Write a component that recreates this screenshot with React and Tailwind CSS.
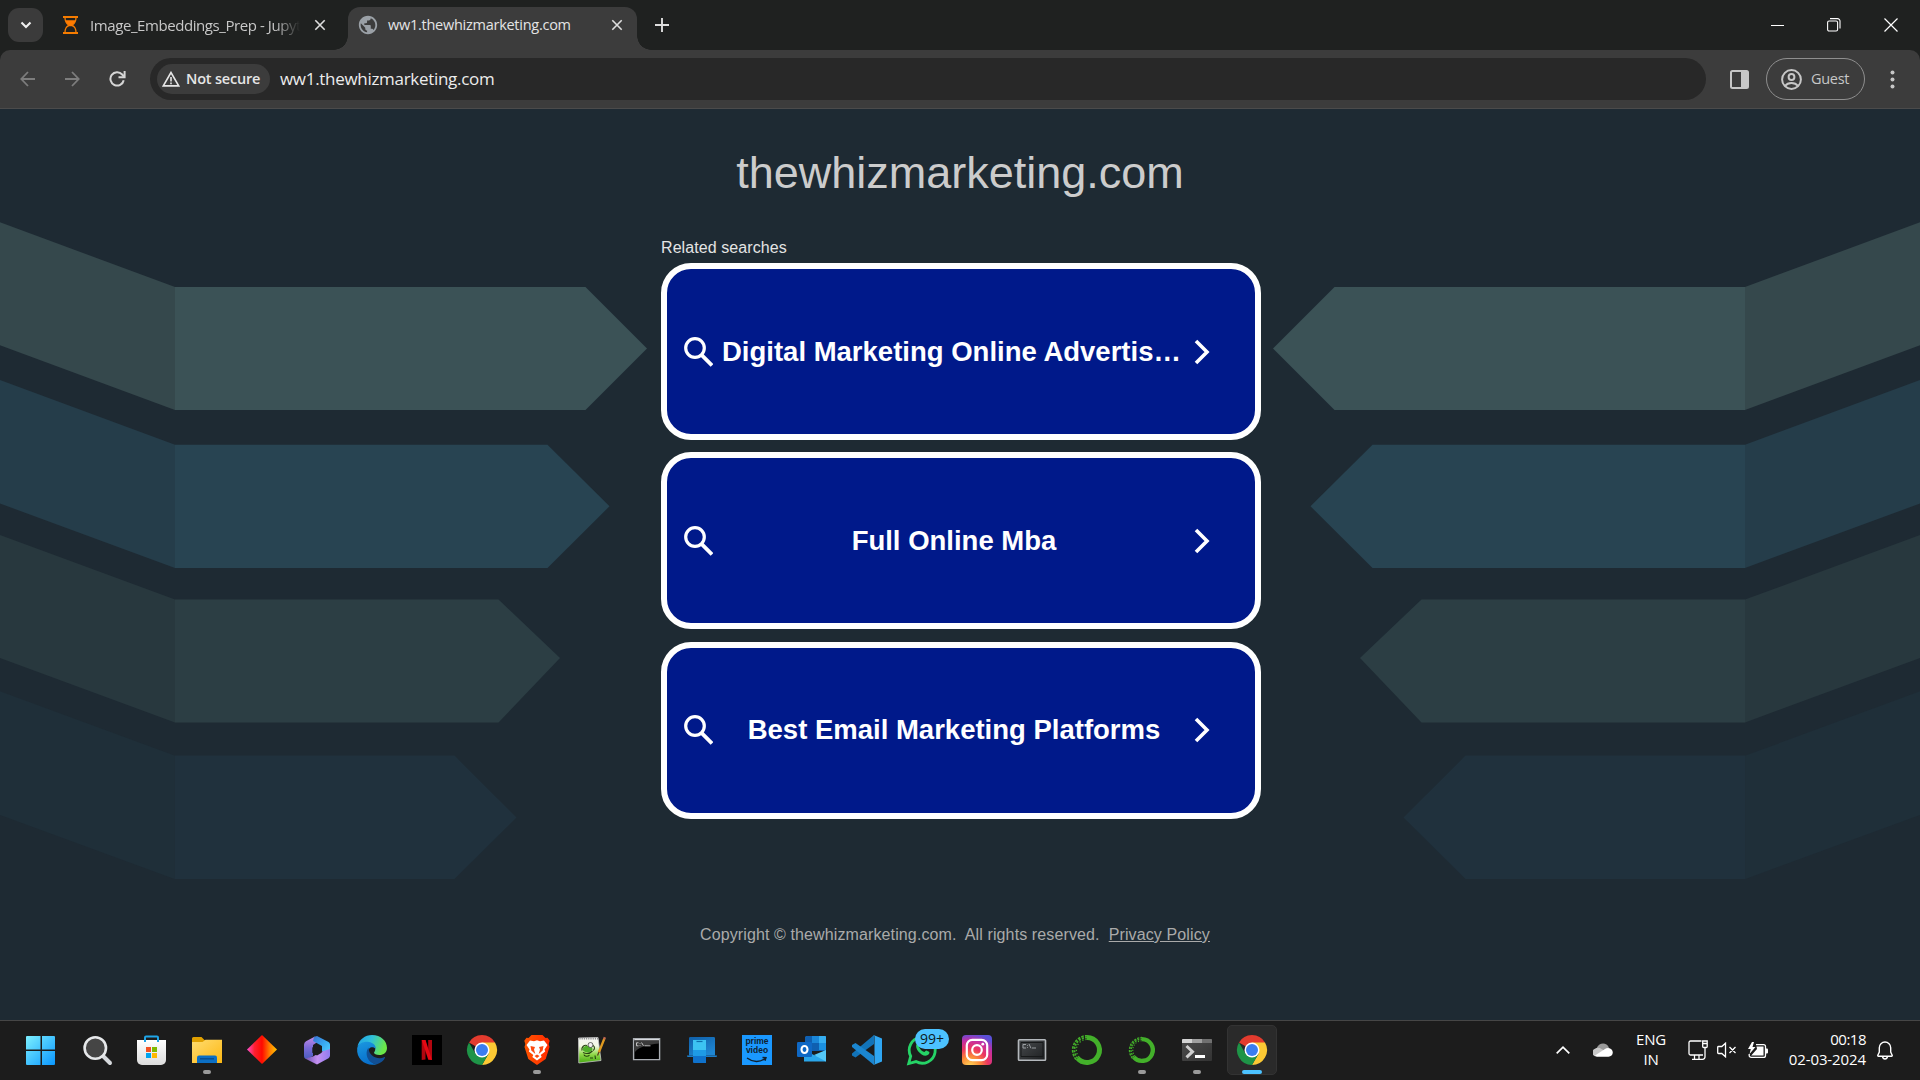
import React from "react";
import { MdPublic } from "react-icons/md";

const UI = "font-['Open_Sans','Noto_Sans',sans-serif]";

/* ---------- Page backdrop ---------- */

function Arrows() {
  return (
    <>
      <path d="M0 222.3 175 287V410L0 345.3Z" fill="#35484c" />
      <path d="M175 287H585.5L647 348.5 585.5 410H175Z" fill="#3b5256" />
      <path d="M0 380 175 444.7V568L0 503.5Z" fill="#253d4a" />
      <path d="M175 444.7H547.5L609.5 506.3 547.5 568H175Z" fill="#284452" />
      <path d="M0 535 175 599.6V722.5L0 658Z" fill="#28383e" />
      <path d="M175 599.6H498.5L560 658 498.5 722.5H175Z" fill="#2c3e44" />
      <path d="M0 691.3 174.5 755.6V879L0 815Z" fill="#1f2f39" />
      <path d="M174.5 755.6H454.5L516.5 817.5 454.5 879H174.5Z" fill="#20313d" />
    </>
  );
}

function Backdrop() {
  return (
    <svg className="absolute inset-0 h-full w-full" viewBox="0 109 1920 911">
      <Arrows />
      <g transform="translate(1920 0) scale(-1 1)">
        <Arrows />
      </g>
    </svg>
  );
}

/* ---------- Browser chrome ---------- */

function CloseX() {
  return (
    <svg className="h-3 w-3 shrink-0" viewBox="0 0 12 12" stroke="#dedede" strokeWidth="1.6">
      <path d="M1.3 1.3l9.4 9.4M10.7 1.3l-9.4 9.4" />
    </svg>
  );
}

function TabStrip() {
  return (
    <div className="flex h-[50px] items-center bg-[#1f2120] pl-2">
      <div className="-mt-px flex h-[34px] w-[35px] items-center justify-center rounded-[11px] bg-[#3b3b3b]">
        <svg width="12" height="8" viewBox="0 0 12 8" fill="none" stroke="#f0f0f0" strokeWidth="2.1">
          <path d="M1.5 1.5L6 6l4.5-4.5" />
        </svg>
      </div>
      <div className="flex h-full w-[305px] items-center pl-5">
        <svg className="shrink-0" width="15" height="18" viewBox="0 0 15 18">
          <path d="M0 0h15v1.900H0zM0 16.100h15V18H0z" fill="#f57c00" />
          <path d="M2 1.500c0 4 1.200 6 3.800 7.500C3.200 10.500 2 12.500 2 16.500M13 1.500c0 4-1.200 6-3.800 7.500 2.600 1.500 3.800 3.500 3.800 7.500" fill="none" stroke="#f57c00" strokeWidth="1.300" />
          <path d="M2.500 4.200h10c-.5 2.300-1.700 3.800-3.300 4.800 1.400.9 2.400 2 3 3.300-1.600-1.500-2.800-2.100-4.700-2.100s-3.100.6-4.700 2.100c.6-1.300 1.600-2.400 3-3.300-1.600-1-2.800-2.500-3.300-4.800z" fill="#ff7b00" />
        </svg>
        <div className="ml-3 w-[210px] overflow-hidden whitespace-nowrap text-[15px] leading-5 tracking-[-0.42px] text-[#c8c8c8] [mask-image:linear-gradient(90deg,#000_88%,transparent)]">
          Image_Embeddings_Prep - Jupyter
        </div>
        <div className="ml-[14px] flex">
          <CloseX />
        </div>
      </div>
      <div className="relative mt-[7px] flex h-[43px] w-[289px] items-center rounded-t-[12px] bg-[#3c3c3c] pb-[7px] pl-[9px] pr-[14px]">
        <div className="absolute bottom-0 -left-3.5 h-3.5 w-3.5 bg-[radial-gradient(circle_at_0_0,transparent_13.5px,#3c3c3c_14px)]" />
        <div className="absolute bottom-0 -right-3.5 h-3.5 w-3.5 bg-[radial-gradient(circle_at_100%_0,transparent_13.5px,#3c3c3c_14px)]" />
        <MdPublic className="h-[22px] w-[22px] shrink-0 text-[#9aa0a6]" />
        <div className="ml-[9px] flex-1 whitespace-nowrap text-[14.500px] leading-5 tracking-[-0.26px] text-[#e4e4e4]">ww1.thewhizmarketing.com</div>
        <CloseX />
      </div>
      <svg className="ml-[18px]" width="14" height="14" viewBox="0 0 14 14" stroke="#dedede" strokeWidth="1.900">
        <path d="M7 0v14M0 7h14" />
      </svg>
      <div className="flex-1" />
      <div className="-mt-px flex items-center gap-[43px] pr-[22px]">
        <svg width="14" height="14" viewBox="0 0 14 14">
          <path d="M1 7h13v1H1z" fill="#fff" />
        </svg>
        <svg width="14" height="14" viewBox="0 0 14 14" fill="none" stroke="#fff" strokeWidth="1.100">
          <rect x="0.600" y="3" width="10" height="10" rx="1.500" />
          <path d="M3 .6h7.500a2.500 2.500 0 0 1 2.500 2.500v7.400" />
        </svg>
        <svg width="14" height="14" viewBox="0 0 14 14" stroke="#fff" strokeWidth="1.200">
          <path d="M.5.500l13 13M13.500.500l-13 13" />
        </svg>
      </div>
    </div>
  );
}

function Toolbar() {
  return (
    <div className="bg-[#1f2120]">
      <div className="flex h-[59px] items-center rounded-t-[10px] border-b border-[#4b4b4b] bg-[#3c3c3c] pl-5">
        <svg width="15" height="16" viewBox="0 0 15 16" fill="none" stroke="#7d7d7d" strokeWidth="1.800">
          <path d="M15 8H1.500M8 1L1.300 8 8 15" />
        </svg>
        <svg className="ml-[30px]" width="15" height="16" viewBox="0 0 15 16" fill="none" stroke="#7d7d7d" strokeWidth="1.800">
          <path d="M0 8h13.500M7 1l6.700 7L7 15" />
        </svg>
        <svg className="ml-[29px]" width="17" height="16" viewBox="0 0 17 16" fill="none" stroke="#d6d6d6" strokeWidth="2">
          <path d="M14.700 9.200A6.700 6.700 0 1 1 13.200 3.500L15 5.500" />
          <path d="M15.600 0v6.300H9.500" />
        </svg>
        <div className="ml-6 flex h-[42px] w-[1556px] items-center rounded-full bg-[#282828] pl-[7px]">
          <div className="flex h-[30px] w-[113px] items-center rounded-full bg-[#3c3c3c] pl-[5px]">
            <svg width="18" height="16" viewBox="0 0 18 16" fill="none" stroke="#e6e6e6" strokeWidth="1.600">
              <path d="M9 1.500L1.300 14.900h15.400zM9 6v4.500M9 11.500v1.700" />
            </svg>
            <span className="ml-1.5 whitespace-nowrap text-[14.500px] font-semibold leading-5 tracking-[-0.2px] text-[#e6e6e6]">Not secure</span>
          </div>
          <span className="ml-2.5 whitespace-nowrap text-[17px] leading-6 tracking-[-0.3px] text-[#ececec]">ww1.thewhizmarketing.com</span>
        </div>
        <svg className="ml-6" width="19" height="19" viewBox="0 0 19 19">
          <rect x="1" y="1" width="17" height="17" rx="1.500" fill="none" stroke="#c7c7c7" strokeWidth="2" />
          <path d="M11 1h7v17h-7z" fill="#c7c7c7" />
        </svg>
        <div className="ml-[17px] flex h-[42px] w-[99px] items-center rounded-full border border-[#8f8f8f] pl-3.5">
          <svg width="21" height="21" viewBox="0 0 21 21" fill="none" stroke="#c7c7c7" strokeWidth="2">
            <circle cx="10.500" cy="10.500" r="9.400" />
            <circle cx="10.500" cy="8" r="2.900" />
            <path d="M4 17c1.500-2 4-3 6.500-3s5 1 6.500 3" />
          </svg>
          <span className="-mt-px ml-[9px] text-[14.500px] leading-5 tracking-[-0.3px] text-[#c7c7c7]">Guest</span>
        </div>
        <svg className="ml-[25px]" width="5" height="19" viewBox="0 0 5 19" fill="#c7c7c7">
          <circle cx="2.500" cy="2.500" r="2" />
          <circle cx="2.500" cy="9.500" r="2" />
          <circle cx="2.500" cy="16.500" r="2" />
        </svg>
      </div>
    </div>
  );
}

/* ---------- Page content ---------- */

function SearchCard({ label }) {
  return (
    <a className="flex h-[177px] w-[600px] items-center rounded-[30px] border-[6px] border-white bg-[#00198a] pl-[17px]">
      <svg className="shrink-0" width="29" height="30" viewBox="0 0 29 30" fill="none" stroke="#fff" strokeWidth="3.200">
        <circle cx="11" cy="11" r="9.300" />
        <path d="M17.500 17.800L28 28.500" strokeWidth="3.800" />
      </svg>
      <div className="ml-[9px] w-[464px] truncate text-center text-[27.500px] font-bold leading-8 text-white">{label}</div>
      <svg className="ml-2 shrink-0" width="16" height="26" viewBox="0 0 16 26" fill="none" stroke="#fff" strokeWidth="3.600">
        <path d="M2 2l11 11L2 24" />
      </svg>
    </a>
  );
}

function Page() {
  return (
    <main className="relative h-[911px] bg-[#1e2a33] font-['Liberation_Sans',Arial,sans-serif]">
      <Backdrop />
      <div className="relative left-px mx-auto flex w-[600px] flex-col">
        <h1 className="mt-[37px] -ml-0.5 text-center text-[45px] leading-[54px] text-[#cccccc]">thewhizmarketing.com</h1>
        <p className="mt-[38px] text-base leading-5 tracking-[0.08px] text-[#e4e4e4]">Related searches</p>
        <div className="mt-[5px] flex flex-col gap-[12.400px]">
          <SearchCard label="Digital Marketing Online Advertising Certificate" />
          <SearchCard label="Full Online Mba" />
          <SearchCard label="Best Email Marketing Platforms" />
        </div>
        <p className="mt-[106px] whitespace-pre pl-[39px] text-base leading-5 tracking-[0.115px] text-[#aaaaaa]">
          {"Copyright © thewhizmarketing.com.  All rights reserved.  "}
          <a className="underline">Privacy Policy</a>
        </p>
      </div>
    </main>
  );
}

/* ---------- Taskbar icons (30×30) ---------- */

function Icon({ children }) {
  return (
    <svg width="30" height="30" viewBox="0 0 30 30" className="overflow-visible">
      {children}
    </svg>
  );
}

function Grad({ id, stops, x2 = 1, y2 = 1 }) {
  return (
    <linearGradient id={id} x1="0" y1="0" x2={x2} y2={y2}>
      {stops.map((c, i) => (
        <stop key={i} offset={i / (stops.length - 1)} stopColor={c} />
      ))}
    </linearGradient>
  );
}

function WindowsIcon() {
  return (
    <Icon>
      <Grad id="win" stops={["#7df0ff", "#43c3ff", "#0a97ff"]} />
      <path d="M0 1h13.500v13.500H-1V2a1 1 0 0 1 1-1zM15 1h12a1 1 0 0 1 1 1v12.500H15zM-1 16h14.500v14H0a1 1 0 0 1-1-1zM15 16h13v13a1 1 0 0 1-1 1H15z" fill="url(#win)" />
    </Icon>
  );
}

function SearchIcon() {
  return (
    <Icon>
      <path d="M20 20l8 8" stroke="#d5d8dc" strokeWidth="4" strokeLinecap="round" />
      <circle cx="13.300" cy="13" r="10.700" fill="#454545" stroke="#e6e8ea" strokeWidth="2.600" />
    </Icon>
  );
}

function StoreIcon() {
  return (
    <Icon>
      <Grad id="store" x2={0} stops={["#ffffff", "#dcdcdc"]} />
      <path d="M8 7V2.500A1 1 0 0 1 9 1.500h11a1 1 0 0 1 1 1V7" fill="none" stroke="#1fa5e8" strokeWidth="2" />
      <path d="M0 5h29v20a5 5 0 0 1-5 5H5a5 5 0 0 1-5-5z" fill="url(#store)" />
      <path d="M7 7V4h2v3zM20 7V4h2v3z" fill="#1fa5e8" />
      <path d="M9 12h5v5H9z" fill="#f25022" />
      <path d="M15 12h5v5h-5z" fill="#7fba00" />
      <path d="M9 18h5v5H9z" fill="#00a4ef" />
      <path d="M15 18h5v5h-5z" fill="#ffb900" />
    </Icon>
  );
}

function FolderIcon() {
  return (
    <Icon>
      <Grad id="fold" stops={["#ffdc70", "#fdb813"]} />
      <path d="M0 3.500A1.500 1.500 0 0 1 1.500 2h8l3 3H28v10H0z" fill="#e0a000" />
      <path d="M0 7h10.500l3-2.300H30V28H0z" fill="url(#fold)" />
      <path d="M5 28v-5.500a2 2 0 0 1 2-2h16a2 2 0 0 1 2 2V28z" fill="#0c6fc4" />
      <path d="M8 23.800h14" stroke="#0a4a8a" strokeWidth="1.300" />
    </Icon>
  );
}

function DiamondIcon() {
  return (
    <Icon>
      <Grad id="dia" y2={0} stops={["#ff4fd0", "#ff2030", "#ff0a00", "#ff7a00", "#ffc400"]} />
      <path d="M15 0l15 14.500L15 29 0 14.500z" fill="url(#dia)" />
    </Icon>
  );
}

function M365Icon() {
  return (
    <Icon>
      <Grad id="m1" x2={0} stops={["#c58be8", "#7a6ad8", "#4a5cc0"]} />
      <Grad id="m2" stops={["#3a6fd0", "#38a8f0", "#55d4ff"]} />
      <Grad id="m3" y2={0} stops={["#6a50b0", "#c490f0", "#8f7cf0"]} />
      <path d="M13 1.500L4 6.300A4 4 0 0 0 2 9.700V21a3 3 0 0 0 3 3l6-3V10l6-4z" fill="url(#m1)" />
      <path d="M12 2l3-1 11.500 6A3 3 0 0 1 28 9.500V20l-8-4v-5l-9-5z" fill="url(#m2)" />
      <path d="M3 23.500L15 29.500l11.500-6.300A3 3 0 0 0 28 20.500V14l-8 2.500-9 5z" fill="url(#m3)" />
      <path d="M15 9.700l4.700 2.700v5.400L15 20.500l-4.700-2.700v-5.400z" fill="#1c1c1c" />
    </Icon>
  );
}

function EdgeIcon() {
  return (
    <Icon>
      <Grad id="e1" y2={0.3} stops={["#1fa0e8", "#30c0d8", "#6be848"]} />
      <Grad id="e2" x2={0.3} stops={["#1b98e0", "#0870cc"]} />
      <path d="M.5 11.500C2 4.500 8 0 15 0c9 0 15 6 15 13 0 4.500-3.500 7-7.500 7-3.500 0-5.500-1.300-5.500-2.300 0-.8 1.300-1.500 1.300-4 0-3.500-3.500-5.500-7.800-5.500-4.300 0-8 1-10 3.300z" fill="url(#e1)" />
      <path d="M.2 13C1.500 8.500 6 6.500 10.500 6.700c5 .2 8.500 3.500 8.300 7-3-3-8-1.700-8 4.300C10.800 24 15 29 20 29.200 10 32-1 25 .2 13z" fill="url(#e2)" />
      <path d="M11.500 12.500c-4.500 6-.5 16.500 8.500 16.700 4-1.300 7-4 8-6.500.3-.8-.5-.8-1-.5-5 2.600-15.500 0-15.500-9.700z" fill="#114f94" />
    </Icon>
  );
}

function NetflixIcon() {
  return (
    <Icon>
      <path d="M0 0h30v30H0z" fill="#000" />
      <path d="M9.700 5h3.800v19.500l-3.800.5zM16.200 5H20v20l-3.800-.5z" fill="#b1060f" />
      <path d="M9.700 5h3.800L20 25l-3.800-.5z" fill="#e50914" />
    </Icon>
  );
}

function ChromeIcon() {
  return (
    <Icon>
      <path d="M15 15L2 7.500A15 15 0 0 1 28 7.500z" fill="#e33b2e" />
      <path d="M15 7.500h13A15 15 0 0 1 15 30L21.500 18.700z" fill="#fcc934" />
      <path d="M2 7.500A15 15 0 0 0 15 30L21.500 18.700 15 15 8.500 18.700z" fill="#1e9447" />
      <circle cx="15" cy="15" r="7.500" fill="#fff" />
      <circle cx="15" cy="15" r="6" fill="#3a7df0" />
    </Icon>
  );
}

function BraveIcon() {
  return (
    <Icon>
      <Grad id="br" y2={0} stops={["#ff5500", "#ff2a00"]} />
      <path d="M9.500 0h11l3 3 2-.3 2.200 3-1 3.300.8 3-3.800 12L15 30l-8.700-6-3.800-12 .8-3-1-3.300 2.200-3 2 .3z" fill="url(#br)" />
      <path d="M8 5.500l4 .7 3-.9 3 .9 4-.7 3.500 4.500-3 4.500.7 2-4.500 3.500 1 2L15 25.500 10.300 22l1-2-4.500-3.500.7-2-3-4.500z" fill="#fff" />
      <path d="M8.500 11l4.500 1-1 2.500 1.300 4.500-4-3.500zM21.500 11l-4.500 1 1 2.500-1.300 4.500 4-3.500zM15 19.500l2.500 1.500-2.500 2-2.500-2z" fill="#fb4a12" />
    </Icon>
  );
}

function NotepadPlusIcon() {
  return (
    <Icon>
      <Grad id="np" x2={0} stops={["#f4f4f4", "#f2f8e4", "#8fd848", "#46a812"]} />
      <path d="M1.500 3L21 2.500l3 23L1.800 28z" fill="url(#np)" stroke="#c8c8c8" strokeWidth="0.800" />
      <path d="M2.500 3.700h18.500" stroke="#888" strokeWidth="1.800" strokeDasharray="1 1.200" />
      <ellipse cx="10.500" cy="14" rx="5" ry="3.200" fill="#4fae2a" />
      <circle cx="13.500" cy="10" r="2.500" fill="#f0f0f0" stroke="#444" strokeWidth="0.800" />
      <path d="M5 15.500c-1-3 2-6 5-5M6 17.500c3 1.500 7 1 9.500-1.500M7 19.500c0 2 4 2.500 5.500.5M13 23h3M18 20.500l.5 3.500M16 10.500c2 1 2 4 0 5" fill="none" stroke="#26420f" strokeWidth="1.100" />
      <path d="M27.200 4l-5.400 13.500" stroke="#e09a20" strokeWidth="2.300" />
      <path d="M27.900 2.200L27.100 4.300" stroke="#c46a50" strokeWidth="2.400" />
      <path d="M22 17L20.500 20.500" stroke="#5a4520" strokeWidth="1.300" />
    </Icon>
  );
}

function CmdIcon() {
  return (
    <Icon>
      <path d="M1.600 3.600h26v21h-26z" fill="#000" stroke="#a9adb2" strokeWidth="1.400" />
      <path d="M2.300 4h24.700v1.500H2.300z" fill="#d8dade" />
      <path d="M2.300 5.500h24.700v3C14 9.500 5 13 2.300 18z" fill="#3a3a3a" />
      <path d="M6.500 7.800H4.500v3h2M8 8.300v.7M8 10v.700M9.500 7.500l2 3.300M12.500 10.800h6" fill="none" stroke="#d0d0d0" strokeWidth="0.900" />
    </Icon>
  );
}

function PhoneLinkIcon() {
  return (
    <Icon>
      <Grad id="tb" x2={0.6} stops={["#0f5fa8", "#1f86d2"]} />
      <path d="M2 3.300A1.300 1.300 0 0 1 3.300 2h23.400A1.300 1.300 0 0 1 28 3.300V20.500H2z" fill="url(#tb)" />
      <path d="M0 20.500h30v.5a1 1 0 0 1-1 1H1a1 1 0 0 1-1-1z" fill="#1b7cc8" />
      <path d="M6 5h13v10.500H6z" fill="#3cc3f2" />
      <path d="M6 15h13v6.500H6z" fill="#1e9be6" />
      <path d="M6 21h13v7H7a1 1 0 0 1-1-1z" fill="#0f72cc" />
      <path d="M9.500 6.500h6" stroke="#0d6fae" strokeWidth="1.200" />
    </Icon>
  );
}

function PrimeIcon() {
  return (
    <div className="flex h-[30px] w-[30px] flex-col items-center bg-[#1a98ff] pt-[2px] font-['Liberation_Sans',Arial,sans-serif] text-[8.500px] font-bold leading-[8.500px] text-[#10202e]">
      <span>prime</span>
      <span>video</span>
      <svg className="mt-0.5" width="22" height="7" viewBox="0 0 22 7" fill="none" stroke="#10202e" strokeWidth="1.400">
        <path d="M1 2c6 4.500 13 4.500 18 .5M16.500 1.500l3.500.200-1 3" />
      </svg>
    </div>
  );
}

function OutlookIcon() {
  return (
    <Icon>
      <path d="M9 1h19a1 1 0 0 1 1 1v14H8V2z" fill="#0f5fb0" />
      <path d="M15 1h7v7h-7z" fill="#1a86d8" />
      <path d="M22 1h6a1 1 0 0 1 1 1v6h-7z" fill="#36aef0" />
      <path d="M22 8h7v7h-7z" fill="#1b90e0" />
      <path d="M7 15l12 6 10-6v11.500H7z" fill="#2aa6ea" />
      <path d="M29 15v11.500L17 20z" fill="#54c8f8" />
      <rect y="7" width="15" height="15" rx="1.200" fill="#0f68c4" />
      <ellipse cx="7.500" cy="14.500" rx="3" ry="3.500" fill="none" stroke="#fff" strokeWidth="2.100" />
    </Icon>
  );
}

function VSCodeIcon() {
  return (
    <Icon>
      <path d="M22 0v9L3.500 22.500 0 20.500v-2z" fill="#1273b8" />
      <path d="M22 30v-9L3.500 8 0 10v2z" fill="#1b86d0" />
      <path d="M21.500 0L30 3.500v23L21.500 30c.7-.5 1-1 1-2V2c0-1-.3-1.500-1-2z" fill="#2fa6f2" />
    </Icon>
  );
}

function WhatsAppIcon() {
  return (
    <div className="relative">
      <Icon>
        <path d="M1.700 28.500l2-7.300A13 13 0 1 1 9 26.600z" fill="none" stroke="#25d366" strokeWidth="2.800" />
        <path d="M9.500 9c1.500-2.500 3-1.500 3.500.5.500 1.500-.8 2-.8 2.700 1 2.300 2.800 3.800 5 4.800.8 0 1.300-1.700 2.300-1.500l2.500 1.300c1.500 1-1 4-3.500 4C13.500 20.500 7.500 13.500 9.500 9z" fill="#25d366" />
      </Icon>
      <div className="absolute -top-1.5 left-2 flex h-5 w-[34px] items-center justify-center rounded-full bg-[#4cc2ff] text-[14px] leading-5 text-[#0d1a22]">99+</div>
    </div>
  );
}

function InstagramIcon() {
  return (
    <Icon>
      <radialGradient id="ig" cx="0.270" cy="1.050" r="1.100">
        <stop offset="0" stopColor="#ffd95a" />
        <stop offset="0.300" stopColor="#fb8c38" />
        <stop offset="0.550" stopColor="#ec3560" />
        <stop offset="0.800" stopColor="#c32fa5" />
        <stop offset="1" stopColor="#5b50d8" />
      </radialGradient>
      <rect width="30" height="30" rx="4" fill="url(#ig)" />
      <g fill="none" stroke="#fff" strokeWidth="2.200">
        <rect x="4.800" y="4.800" width="20.400" height="20.400" rx="5.500" />
        <circle cx="15" cy="15" r="4.800" />
      </g>
      <circle cx="20.800" cy="9.200" r="1.400" fill="#fff" />
    </Icon>
  );
}

function ConsoleIcon() {
  return (
    <Icon>
      <Grad id="con" stops={["#4a4d50", "#1c1e20"]} />
      <rect x="1.500" y="4.800" width="27" height="20.400" rx="0.800" fill="url(#con)" stroke="#b4b8bc" strokeWidth="1.600" />
      <path d="M4 7.500h22v14H4z" fill="none" stroke="#17191a" strokeWidth="1" />
      <path d="M9 9.500H6v3.500h3M10.500 10v.800M10.500 12v.800M12 9l2 4.300M15 13h4" fill="none" stroke="#9a9ea2" strokeWidth="1" />
    </Icon>
  );
}

/* Solid ring on the right, broken into scales on the left */
function AnacondaIcon({ scale = 1 }) {
  return (
    <Icon>
      <g transform={`translate(15 15) scale(${scale})`} fill="none" stroke="#43b02a">
        <path d="M0-12.500A12.500 12.500 0 1 1-9.500 8.200" strokeWidth="5" />
        <path d="M-9.500 8.200A12.500 12.500 0 0 1 0-12.500" strokeWidth="1.800" strokeDasharray="2 1.300" />
        <path d="M-11 9.500A14.500 14.500 0 0 1 0-14.300" strokeWidth="1.600" strokeDasharray="2.600 1.200" />
        <path d="M-8 7A10.600 10.600 0 0 1 0-10.600" strokeWidth="1.300" strokeDasharray="1.300 1.900" />
      </g>
    </Icon>
  );
}

function TerminalIcon() {
  return (
    <Icon>
      <Grad id="term" stops={["#4c4c4c", "#333333"]} />
      <rect y="4" width="30" height="22" rx="1" fill="url(#term)" />
      <path d="M0 8V5a1 1 0 0 1 1-1h9v4z" fill="#d4d4d4" />
      <path d="M10 4h10v4H10z" fill="#a0a0a0" />
      <path d="M20 4h9a1 1 0 0 1 1 1v3H20z" fill="#707070" />
      <path d="M4.500 11l6 5.700-6 5.700" fill="none" stroke="#cfcfcf" strokeWidth="3" />
      <path d="M13 21.500h10" stroke="#fff" strokeWidth="3" />
    </Icon>
  );
}

const apps = [
  { Glyph: WindowsIcon },
  { Glyph: SearchIcon },
  { Glyph: StoreIcon },
  { Glyph: FolderIcon, running: true },
  { Glyph: DiamondIcon },
  { Glyph: M365Icon },
  { Glyph: EdgeIcon },
  { Glyph: NetflixIcon },
  { Glyph: ChromeIcon },
  { Glyph: BraveIcon, running: true },
  { Glyph: NotepadPlusIcon },
  { Glyph: CmdIcon },
  { Glyph: PhoneLinkIcon },
  { Glyph: PrimeIcon },
  { Glyph: OutlookIcon },
  { Glyph: VSCodeIcon },
  { Glyph: WhatsAppIcon },
  { Glyph: InstagramIcon },
  { Glyph: ConsoleIcon },
  { Glyph: AnacondaIcon },
  { Glyph: () => <AnacondaIcon scale={0.87} />, running: true },
  { Glyph: TerminalIcon, running: true },
  { Glyph: ChromeIcon, active: true },
];

function TaskButton({ Glyph, running, active }) {
  return (
    <div
      className={
        "flex h-[50px] w-[50px] flex-col items-center rounded-[5px] border pt-[9px] " +
        (active ? "border-[#333333] bg-[#2a2a2a]" : "border-transparent")
      }
    >
      <Glyph />
      {running && <div className="mt-[5px] h-1 w-2 rounded-full bg-[#9a9a9a]" />}
      {active && <div className="mt-[5px] h-1 w-5 rounded-full bg-[#4cc2ff]" />}
    </div>
  );
}

function Tray() {
  return (
    <div className="flex items-center pr-[27px] text-[15px] leading-5 text-white">
      <svg width="14" height="8" viewBox="0 0 14 8" fill="none" stroke="#fff" strokeWidth="1.700">
        <path d="M.7 7.300L7 1.200l6.300 6.100" />
      </svg>
      <svg className="ml-[23px]" width="20" height="14" viewBox="0 0 20 14">
        <path d="M3.500 5.500C5 1 10-1 13.500 1.500c1.300 1 2 2 2.500 3.500L9 9z" fill="#9a9a9a" />
        <path d="M4 13.500A4 4 0 0 1 1.500 6C4 4.300 6.500 4.500 8.500 6l5 3z" fill="#c8c8c8" />
        <path d="M2 12.500L12 6c2.500-2 7-1 7.700 2.700.5 3-1.500 5-4.200 5H4.500c-1 0-2-.5-2.500-1.200z" fill="#fff" />
      </svg>
      <div className="-mt-px mb-px ml-[23px] w-[30px] text-center tracking-[-0.2px]">
        <div>ENG</div>
        <div>IN</div>
      </div>
      <svg className="ml-[22px]" width="20" height="20" viewBox="0 0 20 20" fill="none" stroke="#fff" strokeWidth="1.300">
        <path d="M13.500 1H2.500A1.500 1.500 0 0 0 1 2.500v11A1.500 1.500 0 0 0 2.500 15h12.500M6.500 15v4M11 15v4M4 19.300h10.500M14.700 1h4.500v5.500a1 1 0 0 1-1 1h-2.500a1 1 0 0 1-1-1zM14.700 3.500h4.500M17 7.500v9a2.500 2.500 0 0 1-2.500 2.800" />
      </svg>
      <svg className="ml-[9px]" width="20" height="16" viewBox="0 0 20 16" fill="none" stroke="#fff" strokeWidth="1.300">
        <path d="M8.500 1.200v13.600L4.800 11.500H1.500a.8.8 0 0 1-.8-.8V5.300c0-.5.400-.8.800-.8h3.300zM12.500 5l6 6M18.500 5l-6 6" />
      </svg>
      <svg className="ml-[11px]" width="20" height="17" viewBox="0 0 20 17">
        <path d="M8 2.600h7.500a2 2 0 0 1 2 2v8.800a2 2 0 0 1-2 2H3.200a2 2 0 0 1-2-2V12" fill="none" stroke="#fff" strokeWidth="1.300" />
        <path d="M8.500 4.500h7v9H3.200L9 7z" fill="#fff" />
        <path d="M18 6.500h1a1 1 0 0 1 1 1v3a1 1 0 0 1-1 1h-1z" fill="#fff" />
        <path d="M4 0L0 7h2.800L1.500 12 7.500 5H4.500L6 0z" fill="#fff" />
      </svg>
      <div className="-mt-px mb-px ml-[18px] w-20 whitespace-nowrap text-right">
        <div className="tracking-[-0.5px]">00:18</div>
        <div className="flex justify-end tracking-[-0.1px]">02-03-2024</div>
      </div>
      <svg className="ml-[11px]" width="16" height="19" viewBox="0 0 16 19" fill="none" stroke="#fff" strokeWidth="1.400">
        <path d="M8 1a5.700 5.700 0 0 1 5.700 5.700v4.300l1.500 3.200c.2.500-.1 1-.6 1H1.400c-.5 0-.8-.5-.6-1L2.300 11V6.700A5.700 5.700 0 0 1 8 1zM5.500 15.500c.3 1.500 1.200 2.500 2.500 2.500s2.200-1 2.500-2.500" />
      </svg>
    </div>
  );
}

function Taskbar() {
  return (
    <footer className={"flex h-[60px] items-center justify-between border-t border-[#464646] bg-[#1c1c1c] pb-px pl-[17px] " + UI}>
      <div className="flex gap-[5px]">
        {apps.map((app, i) => (
          <TaskButton key={i} {...app} />
        ))}
      </div>
      <Tray />
    </footer>
  );
}

export default function App() {
  return (
    <div className="flex h-[1080px] w-[1920px] flex-col overflow-hidden bg-[#1c1c1c]">
      <header className={UI}>
        <TabStrip />
        <Toolbar />
      </header>
      <Page />
      <Taskbar />
    </div>
  );
}
